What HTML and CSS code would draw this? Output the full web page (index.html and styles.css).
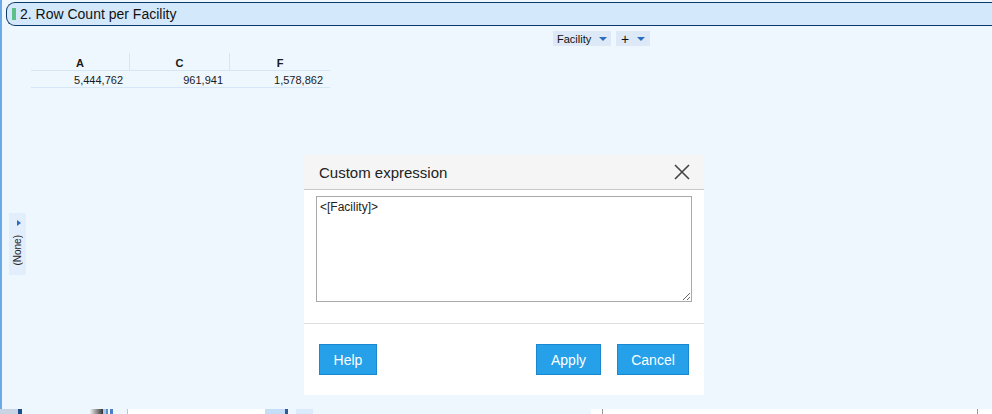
FILE: index.html
```html
<!DOCTYPE html>
<html>
<head>
<meta charset="utf-8">
<link rel="stylesheet" href="styles.css">
</head>
<body>
<div class="page">
  <div class="content">
    <div class="titlebar">
      <span class="marker"></span>
      <span class="title">2. Row Count per Facility</span>
    </div>
    <div class="toolbar">
      <div class="chip chip-facility"><span>Facility</span><span class="tri"></span></div>
      <div class="chip chip-plus"><span class="plus">+</span><span class="tri"></span></div>
    </div>
    <div class="table">
      <div class="row head">
        <div class="cell">A</div>
        <div class="cell">C</div>
        <div class="cell">F</div>
      </div>
      <div class="row data">
        <div class="cell">5,444,762</div>
        <div class="cell">961,941</div>
        <div class="cell">1,578,862</div>
      </div>
    </div>
  </div>
  <div class="strip">
    <span class="s s1"></span><span class="s s2"></span><span class="s s3"></span><span class="s s4"></span><span class="s s5"></span><span class="s s6"></span><span class="s s7"></span><span class="s s8"></span><span class="s s9"></span><span class="s s10"></span><span class="s s11"></span><span class="s s12"></span><span class="s s13"></span><span class="s s14"></span><span class="s s15"></span><span class="s s16"></span><span class="s s17"></span><span class="s s18"></span><span class="s s19"></span>
  </div>

  <div class="sidetab">
    <span class="sidetri"></span>
    <span class="sidetext">(None)</span>
  </div>

  <div class="dialog">
    <div class="dlg-head">
      <span class="dlg-title">Custom expression</span>
      <svg class="close" width="16" height="16" viewBox="0 0 16 16"><path d="M1 1 L15 15 M15 1 L1 15" stroke="#444" stroke-width="1.6" fill="none"/></svg>
    </div>
    <div class="dlg-body">
      <textarea class="expr">&lt;[Facility]&gt;</textarea>
    </div>
    <div class="dlg-foot">
      <button class="btn btn-help">Help</button>
      <span class="spacer"></span>
      <button class="btn btn-apply">Apply</button>
      <button class="btn btn-cancel">Cancel</button>
    </div>
  </div>
</div>
</body>
</html>
```

FILE: styles.css
```css
* { box-sizing: border-box; }
html, body { margin: 0; padding: 0; }
body {
  background: #eef6fe;
  font-family: "Liberation Sans", Arial, sans-serif;
  color: #1a1a1a;
  width: 992px;
  height: 414px;
  overflow: hidden;
}
.page {
  position: relative;
  width: 992px;
  height: 414px;
  display: flex;
  flex-direction: column;
}
.content {
  flex: 1;
  border-left: 2px solid #6aaae8;
  padding-top: 2px;
}
.titlebar {
  margin-left: 4px;
  height: 24px;
  background: #d4e8fc;
  border-top: 1px solid #0a3a6a;
  border-bottom: 1px solid #0a3a6a;
  border-left: 1px solid #0a3a6a;
  border-radius: 9px 0 0 9px;
  display: flex;
  align-items: center;
  padding-left: 5px;
}
.marker {
  width: 4px;
  height: 12px;
  background: #5cc088;
  margin-right: 4px;
}
.title {
  font-size: 14px;
  color: #111;
}
.toolbar {
  display: flex;
  gap: 5px;
  padding-left: 551px;
  margin-top: 5px;
  height: 15px;
}
.chip {
  background: #dde9f6;
  height: 15px;
  display: flex;
  align-items: center;
  font-size: 11px;
  color: #111;
}
.chip-facility { width: 58px; padding-left: 4px; }
.chip-facility .tri { margin-left: 8px; }
.chip-plus { width: 34px; padding-left: 5px; }
.chip-plus .tri { margin-left: 8px; }
.plus { font-size: 14px; line-height: 14px; }
.tri {
  width: 0; height: 0;
  border-left: 4px solid transparent;
  border-right: 4px solid transparent;
  border-top: 4px solid #2a6cc0;
}
.table {
  margin-left: 29px;
  margin-top: 7px;
  width: 299px;
  font-size: 11px;
}
.row { display: flex; }
.row .cell { width: 100px; }
.row .cell:first-child { width: 99px; }
.head { height: 18px; border-bottom: 1px solid #d6e6f6; }
.head .cell {
  font-weight: bold;
  text-align: center;
  padding-top: 4px;
  border-right: 1px solid #d6e6f6;
}
.head .cell:last-child { border-right: none; }
.data { height: 17px; border-bottom: 1px solid #d6e6f6; }
.data .cell {
  text-align: right;
  padding-right: 7px;
  padding-top: 3px;
}
.strip {
  height: 5px;
  display: flex;
}
.s { height: 5px; display: block; }
.s1 { width: 18px; background: #c8d4e4; }
.s2 { width: 4px; background: #1c4f8c; }
.s3 { width: 68px; background: #eef6fe; }
.s4 { width: 13px; background: linear-gradient(to right, #f0f0f0, #333); }
.s5 { width: 3px; background: #a8c8f0; }
.s6 { width: 2px; background: #5e90d0; }
.s7 { width: 2px; background: #eef6fe; }
.s8 { width: 3px; background: #4a80c8; }
.s9 { width: 14px; background: #eef6fe; }
.s10 { width: 1px; background: #a8c8f0; }
.s11 { width: 137px; background: #ffffff; }
.s12 { width: 20px; background: #c4def8; }
.s13 { width: 3px; background: #2c5c98; }
.s14 { width: 8px; background: #eef6fe; }
.s15 { width: 17px; background: #dbeafc; }
.s16 { width: 278px; background: #eef6fe; }
.s17 { width: 12px; background: #ffffff; border-right: 1px solid #999; }
.s18 { width: 375px; background: #ffffff; border-right: 1px solid #999; }
.s19 { flex: 1; background: #ffffff; }

.sidetab {
  position: absolute;
  left: 9px;
  top: 213px;
  width: 17px;
  height: 62px;
  background: #e2eefb;
  display: flex;
  flex-direction: column;
  align-items: center;
  padding-top: 7px;
}
.sidetri {
  width: 0; height: 0;
  border-top: 3px solid transparent;
  border-bottom: 3px solid transparent;
  border-left: 4px solid #2a6cc0;
  margin-left: 2px;
}
.sidetext {
  writing-mode: vertical-rl;
  transform: rotate(180deg);
  font-size: 10px;
  color: #222;
  margin-top: 9px;
}

.dialog {
  position: absolute;
  left: 304px;
  top: 155px;
  width: 400px;
  height: 240px;
  background: #ffffff;
  display: flex;
  flex-direction: column;
}
.dlg-head {
  height: 35px;
  background: #f5f5f5;
  border-bottom: 1px solid #c8c8c8;
  display: flex;
  align-items: center;
  padding-left: 15px;
  padding-right: 14px;
}
.dlg-title {
  flex: 1;
  font-size: 15px;
  color: #222;
  padding-top: 1px;
}
.close { display: block; }
.dlg-body {
  padding: 6px 12px 0 12px;
  height: 134px;
  border-bottom: 1px solid #dedede;
}
.expr {
  display: block;
  width: 376px;
  height: 106px;
  border: 1px solid #a9a9a9;
  padding: 3px 3px;
  font-family: "Liberation Sans", Arial, sans-serif;
  font-size: 12px;
  color: #222;
  resize: both;
  margin: 0;
}
.dlg-foot {
  display: flex;
  align-items: flex-start;
  padding: 20px 15px 0 15px;
  gap: 16px;
}
.spacer { flex: 1; }
.btn {
  height: 31px;
  background: #25a0e9;
  border: 1px solid #1a88d0;
  color: #fff;
  font-family: "Liberation Sans", Arial, sans-serif;
  font-size: 14px;
  padding: 0;
  margin: 0;
}
.btn-help { width: 58px; }
.btn-apply { width: 65px; }
.btn-cancel { width: 72px; }
```
